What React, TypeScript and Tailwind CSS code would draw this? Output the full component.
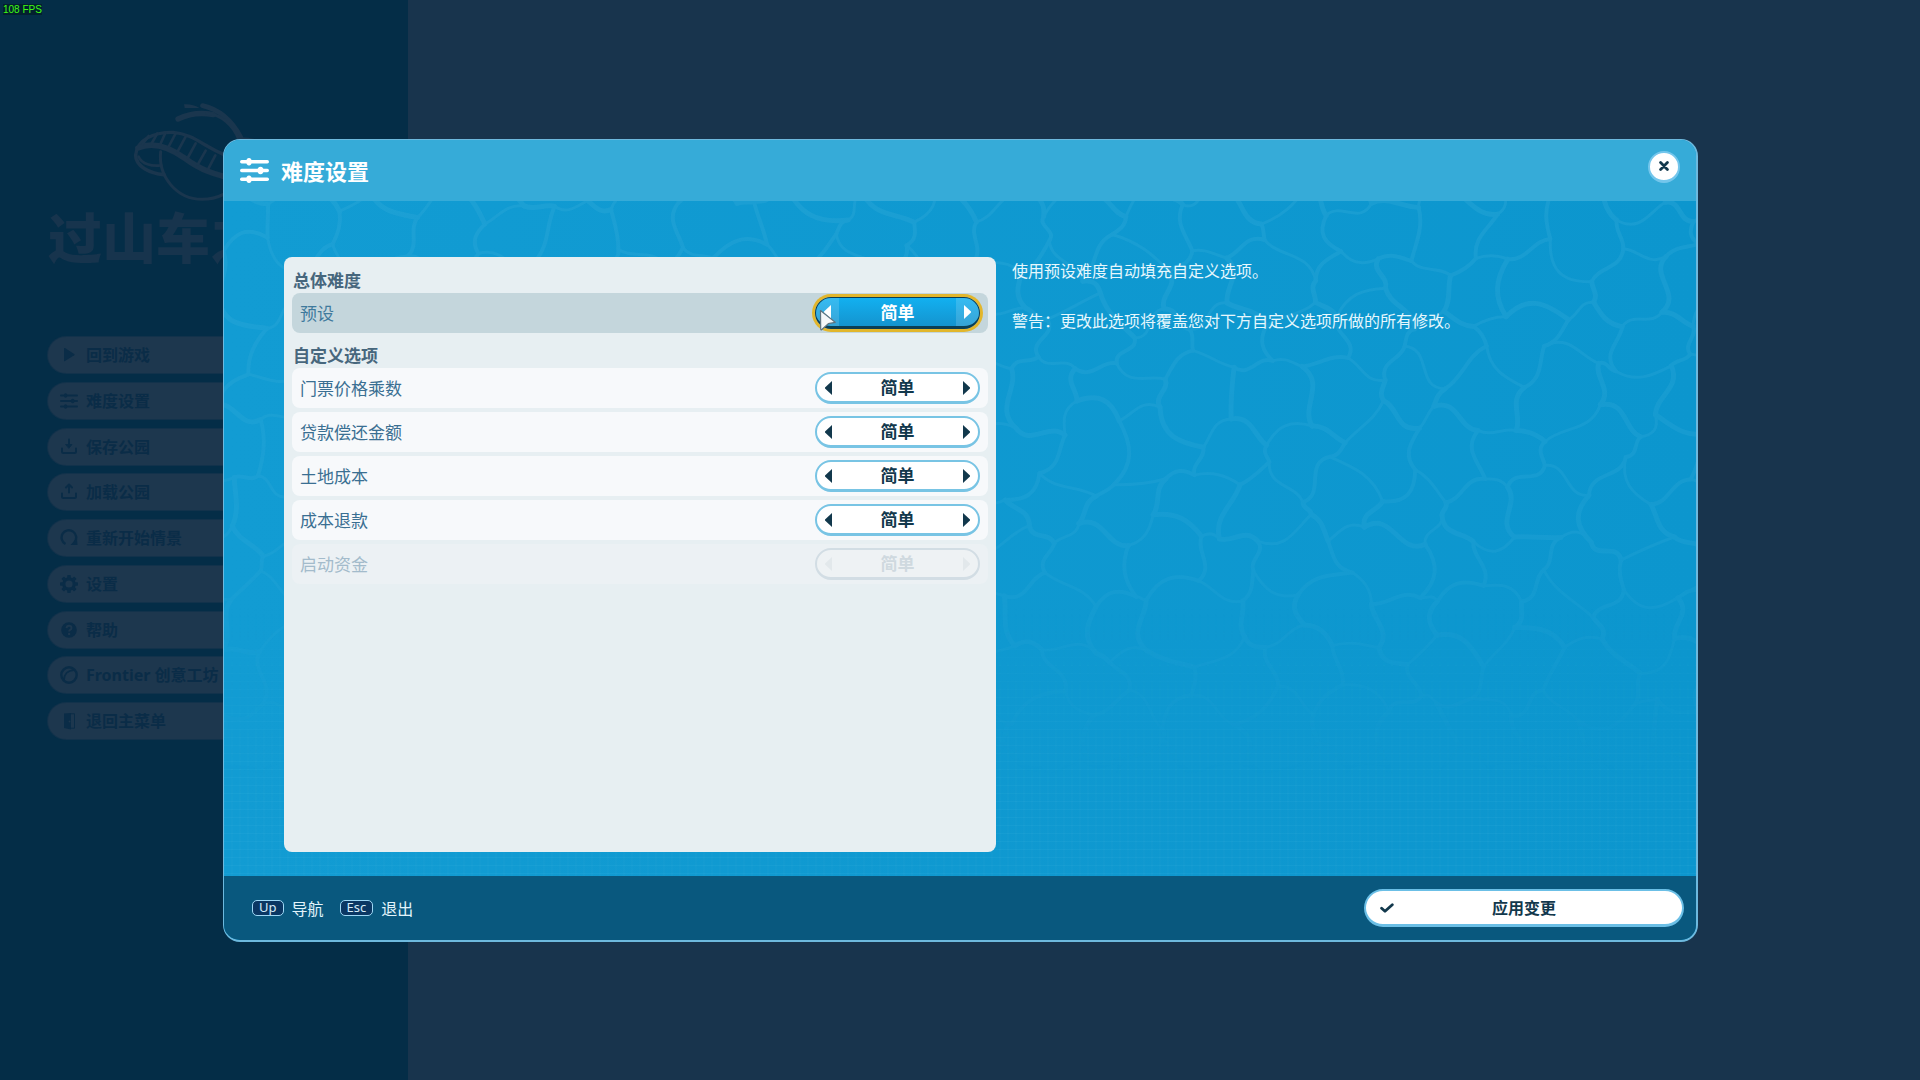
import React from "react";

type IconProps = { className?: string };

const SlidersIcon = ({ className }: IconProps) => (
  <svg viewBox="0 0 29 25" className={className} fill="currentColor" aria-hidden="true">
    <rect x="0" y="2" width="29" height="3.4" rx="1.7" />
    <rect x="0" y="10.8" width="29" height="3.4" rx="1.7" />
    <rect x="0" y="19.6" width="29" height="3.4" rx="1.7" />
    <ellipse cx="9" cy="3.7" rx="2.7" ry="3.7" />
    <ellipse cx="20.5" cy="12.5" rx="3" ry="3.7" />
    <ellipse cx="9" cy="21.3" rx="2.7" ry="3.7" />
  </svg>
);

const PlayIcon = ({ className }: IconProps) => (
  <svg viewBox="0 0 18 18" className={className} fill="currentColor" aria-hidden="true">
    <path d="M4 2.800q0-1.300 1-.7l9.200 5.800q1 .7 0 1.400l-9.200 5.800q-1 .6-1-.7z" />
  </svg>
);

const SaveIcon = ({ className }: IconProps) => (
  <svg viewBox="0 0 18 18" className={className} fill="none" stroke="currentColor" strokeWidth="2" strokeLinecap="round" aria-hidden="true">
    <path d="M2 10.500v3q0 1.500 1.500 1.500h11q1.500 0 1.500-1.500v-3" />
    <path d="M9 1.500v5" />
    <path d="M6 6.500h6l-3 3.500z" fill="currentColor" strokeWidth="1" strokeLinejoin="round" />
  </svg>
);

const LoadIcon = ({ className }: IconProps) => (
  <svg viewBox="0 0 18 18" className={className} fill="none" stroke="currentColor" strokeWidth="2" strokeLinecap="round" strokeLinejoin="round" aria-hidden="true">
    <path d="M2 10.500v3q0 1.500 1.500 1.500h11q1.500 0 1.500-1.500v-3" />
    <path d="M9 9.500v-7M6 4.500l3-3 3 3" />
  </svg>
);

const RestartIcon = ({ className }: IconProps) => (
  <svg viewBox="0 0 18 18" className={className} fill="none" stroke="currentColor" strokeWidth="2.4" aria-hidden="true">
    <path d="M5.500 15A7.300 7.300 0 1 1 14.500 13.200" />
    <path d="M10.500 16h7l-.6-7z" fill="currentColor" stroke="none" />
  </svg>
);

const GearIcon = ({ className }: IconProps) => (
  <svg viewBox="0 0 18 18" className={className} aria-hidden="true">
    <circle cx="9" cy="9" r="5.200" fill="none" stroke="currentColor" strokeWidth="3.200" />
    <g fill="currentColor">
      {[0, 45, 90, 135, 180, 225, 270, 315].map((a) => (
        <rect key={a} x="7.200" y="0" width="3.600" height="4" rx="0.8" transform={`rotate(${a} 9 9)`} />
      ))}
    </g>
  </svg>
);

const HelpIcon = ({ className }: IconProps) => (
  <svg viewBox="0 0 18 18" className={className} aria-hidden="true">
    <circle cx="9" cy="9" r="7.800" fill="currentColor" />
    <path d="M6.500 7.200q.2-2.500 2.500-2.500 2.500 0 2.500 2.200 0 1.300-1.400 2-.9.500-1 1.600" fill="none" stroke="#1d374e" strokeWidth="1.900" />
    <circle cx="9.100" cy="12.900" r="1.200" fill="#1d374e" />
  </svg>
);

const WorkshopIcon = ({ className }: IconProps) => (
  <svg viewBox="0 0 18 18" className={className} fill="none" stroke="currentColor" aria-hidden="true">
    <circle cx="9" cy="9" r="7.700" strokeWidth="2.400" />
    <path d="M4 14C4 8.500 7.500 4.500 14 4.200" strokeWidth="1.800" />
  </svg>
);

const DoorIcon = ({ className }: IconProps) => (
  <svg viewBox="0 0 18 18" className={className} aria-hidden="true">
    <path d="M4 1.500 11 1v16.500L4 16z" fill="currentColor" />
    <path d="M10.500 1.800h4v14.400h-4" fill="none" stroke="currentColor" strokeWidth="1" />
    <circle cx="9.500" cy="9.500" r="0.900" fill="#1d374e" />
  </svg>
);

const CrossIcon = ({ className }: IconProps) => (
  <svg viewBox="0 0 10 10" className={className} fill="none" stroke="currentColor" strokeWidth="2.800" strokeLinecap="round" aria-hidden="true">
    <path d="M1.600 1.600l6.800 6.800M8.400 1.600 1.600 8.400" />
  </svg>
);

const CheckIcon = ({ className }: IconProps) => (
  <svg viewBox="0 0 14 10" className={className} fill="none" stroke="currentColor" strokeWidth="2.800" strokeLinecap="round" strokeLinejoin="round" aria-hidden="true">
    <path d="M1.600 5.200 5 8.300 12.300 1.700" />
  </svg>
);

const Arrow = ({ dir }: { dir: "left" | "right" }) => (
  <svg viewBox="0 0 7 14" className="h-3.5 w-[7px]" fill="currentColor" aria-hidden="true">
    {dir === "left" ? <path d="M7 0v14L0 7.600V6.400z" /> : <path d="M0 0v14l7-6.400V6.400z" />}
  </svg>
);

const Pointer = () => (
  <svg viewBox="0 0 18 23" className="pointer-events-none absolute top-[12px] left-1 h-[23px] w-[18px]" aria-hidden="true">
    <path d="M1.500 1.500 16.200 13.300 9.300 14.700 2.600 20.700Q1.800 21.200 1.700 20z" fill="#f4f7f9" stroke="#5f7480" strokeWidth="1.200" strokeLinejoin="round" />
  </svg>
);

const CoasterLogo = () => (
  <svg viewBox="390 300 420 309" className="ml-[130px] h-[103px] w-[140px] text-[#1a364e]" fill="none" stroke="currentColor" strokeLinecap="round" aria-hidden="true">
    <path d="M552 313q25-2 46 11h-44z" fill="currentColor" stroke="none" />
    <path d="M534 357C565 342 600 336 640 344" strokeWidth="16" />
    <path d="M608 317C665 330 700 370 722 412" strokeWidth="15" />
    <path d="M620 340C665 345 700 375 716 418" strokeWidth="9" />
    <path d="M720 416q25 0 46 6" strokeWidth="9" />
    <path d="M407 465C410 420 460 396 520 397 590 402 630 460 720 480" strokeWidth="10" />
    <path d="M414 444C455 425 505 440 555 475 600 508 640 525 720 540" strokeWidth="17" />
    <path d="M407 465C407 500 450 520 492 524" strokeWidth="11" />
    <path d="M416 470C425 492 455 500 484 496" strokeWidth="8" />
    <path d="M482 455C474 530 530 598 606 598 650 598 690 580 720 540" strokeWidth="9" />
    <path d="M446 408l-18 24M472 400l-18 32M497 397l-16 36M527 400l-20 38M557 410l-24 44M587 430l-24 44M617 452l-24 42M646 466l-22 42" strokeWidth="8" />
  </svg>
);

const noise = (a: number, b: number) => {
  const v = Math.sin(a * 127.1 + b * 311.7) * 43758.5453;
  return v - Math.floor(v);
};

/* Honeycomb of jittered points joined by gently bent strokes: light on pool water. */
const buildRipples = (cols: number, rows: number, w: number, h: number) => {
  const point = (c: number, r: number) => ({
    x: (c - 1) * w + (noise(c, r) - 0.5) * w * 0.8,
    y: (r - 1) * h + ((c + r) % 2 ? h * 0.17 : -h * 0.17) + (noise(r + 50, c) - 0.5) * h * 0.55,
  });
  const join = (a: { x: number; y: number }, b: { x: number; y: number }, k: number) => {
    const p = (noise(k, 7) - 0.5) * 0.8;
    const q = (noise(k, 13) - 0.5) * 0.8;
    const dx = b.x - a.x;
    const dy = b.y - a.y;
    const f = (n: number) => n.toFixed(1);
    return `M${f(a.x)} ${f(a.y)}C${f(a.x + dx * 0.35 - dy * p)} ${f(a.y + dy * 0.35 + dx * p)} ${f(a.x + dx * 0.65 - dy * q)} ${f(a.y + dy * 0.65 + dx * q)} ${f(b.x)} ${f(b.y)}`;
  };
  const lines: string[] = [];
  for (let r = 0; r < rows; r++) {
    for (let c = 0; c < cols; c++) {
      lines.push(join(point(c, r), point(c + 1, r), c * 31 + r));
      if ((c + r) % 2) lines.push(join(point(c, r), point(c, r + 1), c * 17 + r * 5));
    }
  }
  return lines;
};

const RIPPLES = buildRipples(46, 14, 36, 56);

const Water = () => (
  <svg className="absolute inset-0 h-full w-full" preserveAspectRatio="xMidYMin slice" viewBox="0 0 1473 675" aria-hidden="true">
    <defs>
      <linearGradient id="fadeOut" x1="0" y1="0" x2="0" y2="1">
        <stop offset="0" stopColor="#fff" />
        <stop offset="0.5" stopColor="#fff" stopOpacity="0.75" />
        <stop offset="0.85" stopColor="#fff" stopOpacity="0" />
      </linearGradient>
      <linearGradient id="fadeIn" x1="0" y1="0" x2="0" y2="1">
        <stop offset="0.6" stopColor="#fff" stopOpacity="0" />
        <stop offset="0.9" stopColor="#fff" />
      </linearGradient>
      <mask id="rippleMask"><rect width="1473" height="675" fill="url(#fadeOut)" /></mask>
      <mask id="tileMask"><rect width="1473" height="675" fill="url(#fadeIn)" /></mask>
      <pattern id="tiles" width="8" height="8" patternUnits="userSpaceOnUse">
        <path d="M0 .5h8M.5 0v8" stroke="#5cc4ea" strokeOpacity="0.09" />
      </pattern>
    </defs>
    <g mask="url(#rippleMask)">
      <g fill="none" stroke="#36abd9" strokeLinecap="round" opacity="0.3">
        {RIPPLES.map((d, i) => (
          <path key={i} d={d} strokeWidth={3 + (i % 3)} />
        ))}
      </g>
    </g>
    <rect width="1473" height="675" fill="url(#tiles)" mask="url(#tileMask)" />
  </svg>
);

const menu = [
  { label: "回到游戏", Icon: PlayIcon },
  { label: "难度设置", Icon: SlidersIcon },
  { label: "保存公园", Icon: SaveIcon },
  { label: "加载公园", Icon: LoadIcon },
  { label: "重新开始情景", Icon: RestartIcon },
  { label: "设置", Icon: GearIcon },
  { label: "帮助", Icon: HelpIcon },
  { label: "Frontier 创意工坊", Icon: WorkshopIcon },
  { label: "退回主菜单", Icon: DoorIcon },
];

type SpinnerState = "normal" | "active" | "disabled";

const shells: Record<SpinnerState, string> = {
  normal: "border-t-2 border-x-2 border-b-3 border-[#78c4e4] bg-white text-[#12384c]",
  active: "border-t border-x border-b-3 border-[#0b3f55] bg-linear-to-b from-[#12b0f0] to-[#1494cf] text-white shadow-[0_0_0_3px_#e2b62c]",
  disabled: "border-t-2 border-x-2 border-b-3 border-[#d2dde4] bg-[#eef2f4] text-[#cfd9df]",
};

const arrowShells: Record<SpinnerState, string> = {
  normal: "",
  active: "bg-white/15",
  disabled: "text-[#e2e8eb]",
};

const Spinner = ({ label, value, state }: { label: string; value: string; state: SpinnerState }) => (
  <div role="group" aria-label={label} className="relative w-[165px] shrink-0">
    <div className={`flex h-8 items-stretch overflow-hidden rounded-full ${shells[state]}`}>
      <button type="button" aria-label="上一个" disabled={state === "disabled"} className={`flex w-[23px] items-center justify-end pr-2 ${arrowShells[state]}`}>
        <Arrow dir="left" />
      </button>
      <output className="flex flex-1 items-center justify-center pt-px text-[17px] leading-6 font-bold">{value}</output>
      <button type="button" aria-label="下一个" disabled={state === "disabled"} className={`flex w-[23px] items-center justify-start pl-2 ${arrowShells[state]}`}>
        <Arrow dir="right" />
      </button>
    </div>
    {state === "active" && <Pointer />}
  </div>
);

const rowShells: Record<SpinnerState, string> = {
  normal: "bg-[#f7f9fb] text-[#3a6f92]",
  active: "bg-[#c4d6dc] text-[#3f7a9c]",
  disabled: "bg-[#ecf1f4] text-[#a3bbcb]",
};

const Row = ({ label, state }: { label: string; state: SpinnerState }) => (
  <div className={`flex h-10 items-center justify-between rounded-lg px-2 ${rowShells[state]}`}>
    <span className="pt-0.5 text-[17px] leading-6">{label}</span>
    <Spinner label={label} value="简单" state={state} />
  </div>
);

const SectionTitle = ({ children }: { children: React.ReactNode }) => (
  <h2 className="flex h-[35px] items-end pl-px text-[17px] leading-6 font-bold text-[#47677d]">{children}</h2>
);

const KeyHint = ({ keyName, label }: { keyName: string; label: string }) => (
  <div className="flex items-center gap-2">
    <kbd className="flex h-4 items-center rounded-[5px] border border-[#9fd8f5] bg-[#0a3763] px-1.5 font-['Noto_Sans',sans-serif] text-[13px] text-[#d5edfa]">
      {keyName}
    </kbd>
    <span className="pt-0.5 text-base leading-6 text-[#e3f4fb]">{label}</span>
  </div>
);

export default function App() {
  return (
    <div className="relative flex min-h-screen overflow-hidden bg-[#18344d] font-['Noto_Sans','Noto_Sans_CJK_SC',sans-serif]" lang="zh-CN">
      <aside className="flex w-[408px] shrink-0 flex-col bg-[#042d47] pt-[100px]">
        <CoasterLogo />
        <p className="ml-12 pt-0.5 text-[54px] leading-[66px] font-black whitespace-nowrap text-[#17344d]">过山车之星</p>
        <nav className="mt-[66px] ml-12 flex h-[402px] w-[312px] flex-col justify-between">
          {menu.map(({ label, Icon }) => (
            <button
              key={label}
              type="button"
              className="flex h-9 items-center gap-2 rounded-full bg-[#1d374e] pl-3 text-base font-bold text-[#0a2c47] shadow-[0_0_0_1px_#12324b]"
            >
              <Icon className="h-[18px] w-[18px]" />
              {label}
            </button>
          ))}
        </nav>
      </aside>

      <span className="absolute top-1 left-[3px] bg-[#03202f] pt-px font-['Liberation_Sans',sans-serif] text-[10px] leading-[10px] text-[#3dfc12]">
        108 FPS
      </span>

      <div className="absolute inset-0 flex pt-[139px] pr-[222px] pb-[138px] pl-[223px]">
        <section
          role="dialog"
          aria-labelledby="dialog-title"
          className="flex flex-1 flex-col overflow-hidden rounded-[17px] border-t border-r-2 border-b-2 border-l border-[#6db9de] bg-linear-to-r from-[#129cd3] to-[#0c96ce]"
        >
          <header className="flex h-[61px] shrink-0 items-center bg-[#36abd8] pr-4 pl-4">
            <SlidersIcon className="h-[25px] w-[29px] text-white" />
            <h1 id="dialog-title" className="ml-3 text-[22px] leading-8 font-bold text-white">难度设置</h1>
            <button
              type="button"
              aria-label="关闭"
              className="mb-2 ml-auto flex h-8 w-8 items-center justify-center rounded-full border-2 border-b-3 border-[#74c6ec] bg-white text-[#12384c]"
            >
              <CrossIcon className="h-2.5 w-2.5" />
            </button>
          </header>

          <div className="relative flex flex-1">
            <Water />
            <div className="relative grid flex-1 grid-cols-[712px_1fr] gap-4 pt-14 pr-6 pb-6 pl-[60px]">
              <div className="rounded-lg bg-[#e7eff2] px-2 pt-px">
                <SectionTitle>总体难度</SectionTitle>
                <Row label="预设" state="active" />
                <SectionTitle>自定义选项</SectionTitle>
                <div className="flex flex-col gap-1">
                  <Row label="门票价格乘数" state="normal" />
                  <Row label="贷款偿还金额" state="normal" />
                  <Row label="土地成本" state="normal" />
                  <Row label="成本退款" state="normal" />
                  <Row label="启动资金" state="disabled" />
                </div>
              </div>
              <div className="flex flex-col gap-[25px] pt-0.5 text-base leading-[25px] text-[#e6f7fd]">
                <p>使用预设难度自动填充自定义选项。</p>
                <p>警告：更改此选项将覆盖您对下方自定义选项所做的所有修改。</p>
              </div>
            </div>
          </div>

          <footer className="flex h-16 shrink-0 items-center justify-between bg-[#09587e] pr-3 pl-7">
            <div className="flex items-center gap-4">
              <KeyHint keyName="Up" label="导航" />
              <KeyHint keyName="Esc" label="退出" />
            </div>
            <button
              type="button"
              className="relative flex h-[38px] w-80 items-center justify-center rounded-full border-2 border-b-3 border-[#6bbfe6] bg-white text-base font-bold text-[#12384c]"
            >
              <CheckIcon className="absolute left-3.5 h-2.5 w-3.5" />
              应用变更
            </button>
          </footer>
        </section>
      </div>
    </div>
  );
}
